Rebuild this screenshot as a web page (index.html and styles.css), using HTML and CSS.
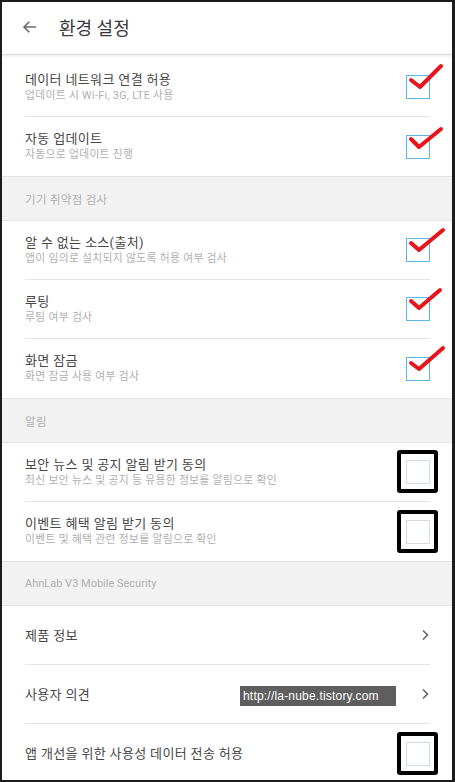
FILE: index.html
```html
<!DOCTYPE html>
<html lang="ko">
<head>
<meta charset="utf-8">
<link rel="stylesheet" href="styles.css">
</head>
<body>
<div class="frame">
  <header class="appbar">
    <svg class="back" width="18" height="18" viewBox="0 0 24 24"><path d="M20 12H4.5M11 5l-7 7 7 7" fill="none" stroke="#6b6b6b" stroke-width="2.2"/></svg>
    <h1 class="title">환경 설정</h1>
  </header>

  <div class="list">
    <div class="row">
      <div class="texts"><div class="t">데이터 네트워크 연결 허용</div><div class="s">업데이트 시 Wi-Fi, 3G, LTE 사용</div></div>
      <div class="cbwrap"><span class="cb on"></span>
        <svg class="red" width="44" height="40" viewBox="0 0 44 40"><path d="M4 17 L13 24 L34 3" fill="none" stroke="#e8141c" stroke-width="4" stroke-linecap="round" stroke-linejoin="round"/></svg></div>
    </div>
    <div class="row last">
      <div class="texts"><div class="t">자동 업데이트</div><div class="s">자동으로 업데이트 진행</div></div>
      <div class="cbwrap"><span class="cb on"></span>
        <svg class="red" width="44" height="40" viewBox="0 0 44 40"><path d="M4 16 L12 24 L34 6" fill="none" stroke="#e8141c" stroke-width="4" stroke-linecap="round" stroke-linejoin="round"/></svg></div>
    </div>

    <div class="section">기기 취약점 검사</div>

    <div class="row">
      <div class="texts"><div class="t">알 수 없는 소스(출처)</div><div class="s">앱이 임의로 설치되지 않도록 허용 여부 검사</div></div>
      <div class="cbwrap"><span class="cb on"></span>
        <svg class="red" width="44" height="40" viewBox="0 0 44 40"><path d="M4 17 L12 24 L36 4" fill="none" stroke="#e8141c" stroke-width="4" stroke-linecap="round" stroke-linejoin="round"/></svg></div>
    </div>
    <div class="row">
      <div class="texts"><div class="t">루팅</div><div class="s">루팅 여부 검사</div></div>
      <div class="cbwrap"><span class="cb on"></span>
        <svg class="red" width="44" height="40" viewBox="0 0 44 40"><path d="M4 16 L12 23 L33 5" fill="none" stroke="#e8141c" stroke-width="4" stroke-linecap="round" stroke-linejoin="round"/></svg></div>
    </div>
    <div class="row last">
      <div class="texts"><div class="t">화면 잠금</div><div class="s">화면 잠금 사용 여부 검사</div></div>
      <div class="cbwrap"><span class="cb on"></span>
        <svg class="red" width="44" height="40" viewBox="0 0 44 40"><path d="M4 18 L12 24 L36 3" fill="none" stroke="#e8141c" stroke-width="4" stroke-linecap="round" stroke-linejoin="round"/></svg></div>
    </div>

    <div class="section">알림</div>

    <div class="row">
      <div class="texts"><div class="t">보안 뉴스 및 공지 알림 받기 동의</div><div class="s">최신 보안 뉴스 및 공지 등 유용한 정보를 알림으로 확인</div></div>
      <div class="cbwrap"><span class="cb"></span><span class="mark"></span></div>
    </div>
    <div class="row last">
      <div class="texts"><div class="t">이벤트 혜택 알림 받기 동의</div><div class="s">이벤트 및 혜택 관련 정보를 알림으로 확인</div></div>
      <div class="cbwrap"><span class="cb"></span><span class="mark"></span></div>
    </div>

    <div class="section latin">AhnLab V3 Mobile Security</div>

    <div class="row">
      <div class="texts"><div class="t">제품 정보</div></div>
      <svg class="chev" width="10" height="14" viewBox="0 0 10 14"><path d="M3 2.5 L7.5 7 L3 11.5" fill="none" stroke="#666" stroke-width="1.6"/></svg>
    </div>
    <div class="row">
      <div class="texts"><div class="t">사용자 의견</div></div>
      <div class="wm">http://la-nube.tistory.com</div>
      <svg class="chev" width="10" height="14" viewBox="0 0 10 14"><path d="M3 2.5 L7.5 7 L3 11.5" fill="none" stroke="#666" stroke-width="1.6"/></svg>
    </div>
    <div class="row last">
      <div class="texts"><div class="t">앱 개선을 위한 사용성 데이터 전송 허용</div></div>
      <div class="cbwrap"><span class="cb"></span><span class="mark"></span></div>
    </div>
  </div>
</div>
</body>
</html>
```

FILE: styles.css
```css
* { box-sizing: border-box; }
html, body { margin: 0; padding: 0; }
body {
  width: 455px;
  height: 782px;
  overflow: hidden;
  background: #1c1c1c;
  font-family: Roboto, "Noto Sans CJK KR", sans-serif;
}
.frame {
  width: 455px;
  height: 782px;
  border-style: solid;
  border-color: #1c1c1c;
  border-width: 2px 3px 2px 2px;
  background: #fff;
  overflow: hidden;
  display: flex;
  flex-direction: column;
}
.appbar {
  height: 53px;
  flex: none;
  display: flex;
  align-items: center;
  background: #fff;
  border-bottom: 1px solid #dcdcdc;
  box-shadow: 0 2px 2px rgba(0,0,0,0.06);
  position: relative;
  z-index: 1;
}
.back { margin-left: 19px; margin-top: -2px; }
.title {
  margin: -3px 0 0 20px;
  font-size: 18px;
  font-weight: 400;
  color: #3a3a3a;
  letter-spacing: 0;
}
.list {
  margin-top: 3px;
  display: flex;
  flex-direction: column;
}
.row {
  height: 59px;
  margin: 0 22px 0 23px;
  border-bottom: 1px solid #e4e4e4;
  display: flex;
  align-items: center;
  position: relative;
  flex: none;
}
.row.last { border-bottom: none; height: 59px; }
.texts { flex: 1; }
.t {
  font-size: 13px;
  color: #474747;
  line-height: 17px;
  letter-spacing: 0.35px;
}
.s {
  font-size: 10.8px;
  color: #b0b0b0;
  line-height: 16px;
  letter-spacing: 0.3px;
}
.section {
  height: 45px;
  flex: none;
  background: #f2f2f2;
  border-top: 1px solid #e4e4e4;
  border-bottom: 1px solid #e4e4e4;
  padding-left: 23px;
  display: flex;
  align-items: center;
  font-size: 11.5px;
  color: #b0b0b0;
  letter-spacing: 0.3px;
}
.section.latin { font-size: 11px; letter-spacing: 0; }
.cbwrap {
  position: relative;
  width: 24px;
  height: 24px;
  flex: none;
}
.cb {
  display: block;
  width: 24px;
  height: 24px;
  border: 1.5px solid #cfdce6;
}
.cb.on { border-color: #5cb6e6; }
.red {
  position: absolute;
  left: 1px;
  top: -12px;
}
.mark {
  position: absolute;
  left: -9px;
  top: -10px;
  width: 41px;
  height: 43px;
  border: 4.5px solid #000;
  border-radius: 3px;
}
.chev { flex: none; margin-right: 0; }
.wm {
  position: absolute;
  left: 215px;
  top: 21px;
  width: 156px;
  height: 20px;
  background: #5e5e5e;
  color: #fff;
  font-family: "Liberation Sans", sans-serif;
  font-size: 12px;
  line-height: 20px;
  padding-left: 3px;
  letter-spacing: 0.2px;
}
```
